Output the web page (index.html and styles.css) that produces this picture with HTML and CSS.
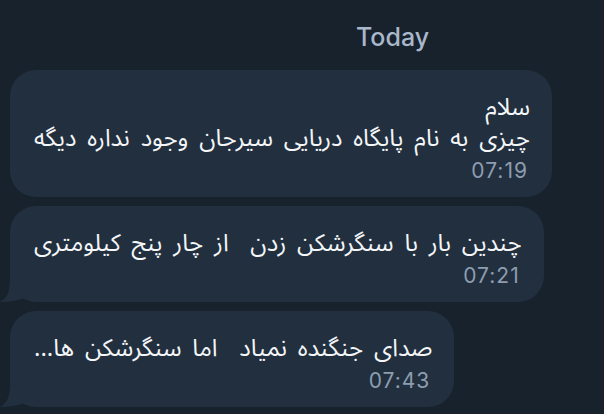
FILE: index.html
```html
<!DOCTYPE html>
<html lang="fa">
<head>
<meta charset="utf-8">
<title>Chat</title>
<link rel="stylesheet" href="styles.css">
</head>
<body>
<div class="chat">
  <div class="date-row"><span class="date">Today</span></div>
  <div class="messages">
    <div class="bubble">
      <div class="text">سلام
چیزی به نام پایگاه دریایی سیرجان وجود نداره دیگه</div>
      <div class="time">07:19</div>
    </div>
    <div class="bubble has-tail">
      <div class="text">چندین بار با سنگرشکن زدن  از چار پنج کیلومتری</div>
      <div class="time">07:21</div>
      <svg class="tail" width="36" height="28" viewBox="0 0 36 28" aria-hidden="true"><path d="M10 4 C10 16 8 24 0 28 Q14 28 25 24 L30 10 Z"/></svg>
    </div>
    <div class="bubble has-tail">
      <div class="text">صدای جنگنده نمیاد  اما سنگرشکن ها...</div>
      <div class="time">07:43</div>
      <svg class="tail" width="36" height="28" viewBox="0 0 36 28" aria-hidden="true"><path d="M10 4 C10 16 8 24 0 28 Q14 28 25 24 L30 10 Z"/></svg>
    </div>
  </div>
</div>
</body>
</html>
```
FILE: styles.css
```css
html, body {
  margin: 0;
  padding: 0;
  background: #18222d;
  height: 100%;
  overflow: hidden;
}

.chat {
  display: flex;
  flex-direction: column;
}

.date-row {
  padding: 22px 0 0 356px;
  height: 30px;
  line-height: 30px;
}

.date {
  font-family: Inter, "Liberation Sans", sans-serif;
  font-size: 25px;
  font-weight: 500;
  color: #a9b8ca;
}

.messages {
  margin-top: 18px;
  display: flex;
  flex-direction: column;
  align-items: flex-start;
  gap: 9px;
  padding-left: 10px;
}

.bubble {
  position: relative;
  background: #212f3f;
  border-radius: 26px;
  padding: 22px 22px 13px 24px;
  direction: rtl;
}

.text {
  font-family: "Noto Sans Arabic", "DejaVu Sans", sans-serif;
  font-size: 24px;
  line-height: 31px;
  word-spacing: 4.6px;
  color: #f4f6f8;
  white-space: pre-wrap;
  text-align: right;
}

.time {
  direction: ltr;
  text-align: right;
  margin-top: 4px;
  margin-right: 2px;
  font-family: Inter, "Liberation Sans", sans-serif;
  font-size: 21px;
  letter-spacing: 1px;
  line-height: 26px;
  color: #8d9db0;
}

.tail {
  position: absolute;
  left: -10px;
  bottom: 0;
  fill: #212f3f;
}
```
